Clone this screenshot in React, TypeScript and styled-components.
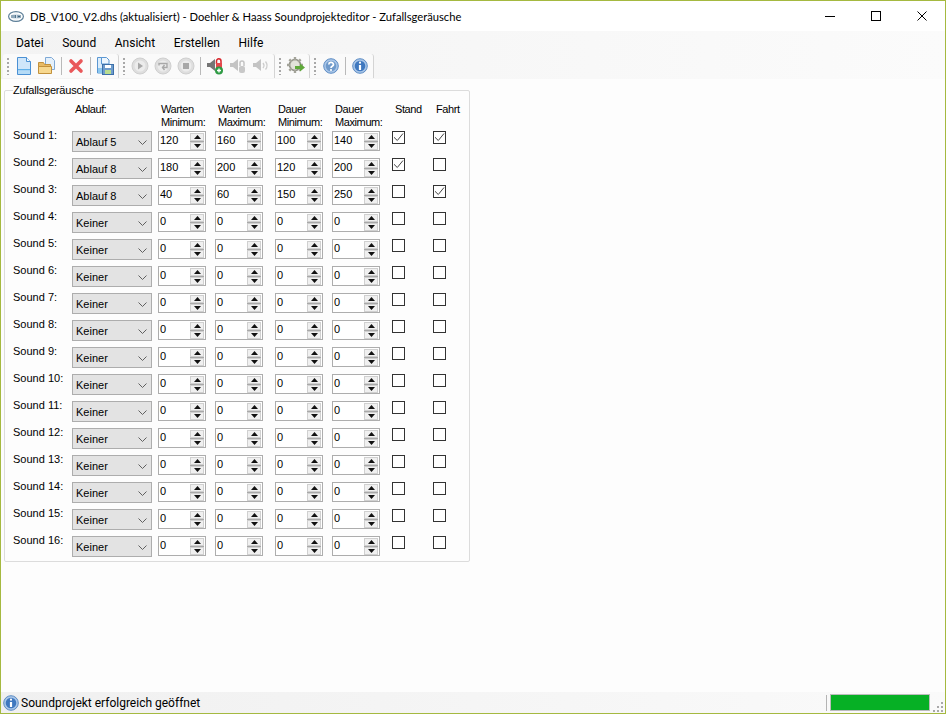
import * as React from "react";
import styled, { createGlobalStyle } from "styled-components";

const GlobalStyle = createGlobalStyle`
  html, body {
    margin: 0;
    padding: 0;
    background: #fff;
  }
`;

const Window = styled.div`
  width: 946px;
  height: 714px;
  box-sizing: border-box;
  border: 1px solid #a5b940;
  display: flex;
  flex-direction: column;
  background: #fdfdfd;
  font-family: "Liberation Sans", Arial, sans-serif;
  font-size: 11px;
  color: #000;
  overflow: hidden;
`;

const TitleBar = styled.div`
  height: 30px;
  flex: none;
  display: flex;
  align-items: center;
  background: #fff;
  padding-left: 7px;
`;

const TitleText = styled.div`
  font-family: Lato, sans-serif;
  font-size: 11.2px;
  margin-left: 6px;
  flex: 1;
  white-space: nowrap;
`;

const WindowButton = styled.div`
  width: 46px;
  height: 30px;
  display: flex;
  align-items: center;
  justify-content: center;
`;

const MenuBar = styled.div`
  height: 23px;
  flex: none;
  display: flex;
  align-items: center;
  padding-left: 5.7px;
  background: linear-gradient(90deg, #f3f3f3, #fbfbfb);
`;

const MenuItem = styled.div`
  font-family: Roboto, sans-serif;
  font-size: 12px;
  padding: 0 9.3px;
`;

const ToolBar = styled.div`
  height: 25px;
  flex: none;
  display: flex;
  padding-left: 2px;
  background: linear-gradient(90deg, #f3f3f3, #fbfbfb);
`;

const ToolStrip = styled.div<{ $width: number }>`
  width: ${(p) => p.$width}px;
  height: 24px;
  box-sizing: border-box;
  display: flex;
  align-items: center;
  background: #fafafa;
  border-radius: 3px 3px 0 0;
  border-right: 1px solid #d4d4d4;
`;

const Grip = styled.div`
  width: 2px;
  height: 17px;
  margin: 0 3.5px 0 4px;
  flex: none;
  background: repeating-linear-gradient(180deg, #a8a8a8 0 2px, transparent 2px 4px);
`;

const ToolButton = styled.div`
  width: 23px;
  height: 22px;
  flex: none;
  display: flex;
  align-items: center;
  justify-content: center;
`;

const ToolSeparator = styled.div`
  width: 1px;
  height: 18px;
  margin: 0 2.5px;
  flex: none;
  background: #b9b9b9;
`;

const Content = styled.div`
  flex: 1;
  min-height: 0;
  padding: 4px 0 0 3px;
`;

const GroupBox = styled.fieldset`
  width: 466px;
  height: 479px;
  box-sizing: border-box;
  margin: 0;
  padding: 0 0 0 8px;
  border: 1px solid #dcdcdc;
  border-radius: 2px;
`;

const Legend = styled.legend`
  padding: 0 2px 0 0;
  margin-left: 0;
  line-height: 14px;
  letter-spacing: -0.2px;
`;

const SoundGrid = styled.div`
  display: grid;
  grid-template-columns: 59px 86px 57px 60px 57px 60px 41px 36px;
  grid-template-rows: 29px repeat(16, 27px);
  margin-top: 5px;
`;

const HeaderCell = styled.div`
  line-height: 13px;
  padding: 1px 0 0 3px;
  white-space: nowrap;
  letter-spacing: -0.4px;
`;

const HeaderSpacer = styled.div``;

const SoundLabel = styled.div`
  line-height: 14px;
  margin-top: -3px;
  white-space: nowrap;
`;

const Combo = styled.div`
  width: 80px;
  height: 21px;
  box-sizing: border-box;
  border: 1px solid #adadad;
  background: #e3e3e3;
  display: flex;
  align-items: center;
  justify-content: space-between;
  padding: 1px 4px 0 3px;
`;

const Spin = styled.div`
  width: 48px;
  height: 20px;
  box-sizing: border-box;
  border: 1px solid #adadad;
  background: #fff;
  display: flex;
  align-items: flex-start;
  justify-content: space-between;
  padding: 1px 1px 0 1px;
  line-height: 14px;
`;

const SpinButtons = styled.div`
  width: 14px;
  height: 17px;
  display: flex;
  flex-direction: column;
  justify-content: space-between;
  background: #a8a8a8;
`;

const SpinButton = styled.div`
  height: 8px;
  box-sizing: border-box;
  background: #f0f0f0;
  border: 1px solid #d0d0d0;
  display: flex;
  align-items: center;
  justify-content: center;
`;

const CheckBox = styled.div`
  width: 13px;
  height: 13px;
  box-sizing: border-box;
  border: 1px solid #333;
  background: #fff;
  display: flex;
  align-items: center;
  justify-content: center;
`;

const StatusBar = styled.div`
  height: 21px;
  flex: none;
  display: flex;
  align-items: center;
  padding-left: 2px;
  background: linear-gradient(90deg, #f0f0f0, #fafafa);
`;

const StatusText = styled.div`
  font-family: Roboto, sans-serif;
  font-size: 12px;
  margin-left: 2px;
  flex: 1;
  white-space: nowrap;
`;

const StatusSeparator = styled.div`
  width: 1px;
  height: 16px;
  background: #b4b4b4;
  margin-right: 3px;
`;

const Progress = styled.div`
  width: 100px;
  height: 17px;
  box-sizing: border-box;
  border: 1px solid #bcbcbc;
  background: #06b025;
`;

const ResizeGrip = styled.div`
  width: 15px;
  height: 21px;
  display: flex;
  align-items: flex-end;
  justify-content: flex-end;
`;

const LogoIcon = () => (
  <svg width="16" height="11" viewBox="0 0 16 11">
    <ellipse cx="8" cy="5.5" rx="7.4" ry="4.8" fill="#fff" stroke="#5d7f98" strokeWidth="1.2" />
    <ellipse cx="8" cy="5.5" rx="5.2" ry="3" fill="#dfe8ef" />
    <path d="M4 4v3M6 4v3M7.6 4v3M10 4v3M12 4v3M10 5.5h2" stroke="#2f5a78" strokeWidth="0.9" fill="none" />
  </svg>
);

const NewIcon = () => (
  <svg width="16" height="18" viewBox="0 0 16 18">
    <path d="M1.500.5h9l4 4v13h-13z" fill="#cfe6fa" stroke="#4a90d4" />
    <path d="M10.500.5v4h4" fill="#f4faff" stroke="#4a90d4" />
    <rect x="2" y="12" width="12" height="1.500" fill="#5fb0ea" />
    <rect x="2" y="13.500" width="12" height="3.500" fill="#b5dbf6" />
  </svg>
);

const OpenIcon = () => (
  <svg width="18" height="18" viewBox="0 0 18 18">
    <path d="M7.500.5h6l3 3v9h-9z" fill="#e4f0fb" stroke="#7fa9d6" />
    <path d="M.5 5.500h5l1 2h6v3h-12z" fill="#e8bb66" stroke="#c2913c" />
    <path d="M.5 16.500v-7h13v7z" fill="#f7d88f" stroke="#c2913c" />
  </svg>
);

const DeleteIcon = () => (
  <svg width="16" height="16" viewBox="0 0 16 16">
    <path d="M3 3l10 10M13 3L3 13" stroke="#e9585a" strokeWidth="3.600" strokeLinecap="round" />
  </svg>
);

const SaveIcon = () => (
  <svg width="18" height="18" viewBox="0 0 18 18">
    <path d="M1.500.5h6l2.500 2.500v13h-8.500z" fill="#dcedfb" stroke="#5b97d2" />
    <path d="M5.500.5h5l2.500 2.500v4h-7.500z" fill="#eef6fd" stroke="#5b97d2" />
    <rect x="2" y="11" width="5" height="5" fill="#8cc8f0" />
    <rect x="6.500" y="7.500" width="11" height="10" fill="#6f9ccc" stroke="#3c6fa8" />
    <rect x="9" y="8" width="6" height="3" fill="#fff" />
    <rect x="9" y="13" width="6" height="4" fill="#b9dc8e" />
  </svg>
);

const MediaIcon = ({ kind }: { kind: "play" | "loop" | "stop" }) => (
  <svg width="18" height="18" viewBox="0 0 18 18">
    <circle cx="9" cy="9" r="8" fill="#dedede" stroke="#cfcfcf" />
    <circle cx="9" cy="9" r="5.500" fill="#ececec" />
    {kind === "play" && <path d="M7 5.500l5 3.500-5 3.500z" fill="#a8a8a8" />}
    {kind === "loop" && <path d="M5 8.500v-2h8v4h-4M10.500 8l-2 2.500 2 2.500" fill="none" stroke="#a8a8a8" strokeWidth="1.400" />}
    {kind === "stop" && <rect x="6" y="6" width="6" height="6" fill="#a8a8a8" />}
  </svg>
);

const SpeakerAddIcon = () => (
  <svg width="18" height="18" viewBox="0 0 18 18">
    <path d="M1 6h3l5-4v12l-5-4H1z" fill="#757575" />
    <path d="M10.500 7V4a2.200 2.200 0 0 1 4.500 0v3" fill="none" stroke="#d8242a" strokeWidth="1.500" />
    <rect x="10" y="6" width="6" height="5" fill="#e5484c" />
    <circle cx="13" cy="13.500" r="4" fill="#2f9b45" />
    <path d="M13 11.500v4M11 13.500h4" stroke="#fff" strokeWidth="1.400" />
  </svg>
);

const SpeakerLockIcon = () => (
  <svg width="18" height="18" viewBox="0 0 18 18">
    <path d="M1 6h3l5-4v12l-5-4H1z" fill="#c4c4c4" />
    <path d="M11 9V6a2 2 0 0 1 4 0v3" fill="none" stroke="#c4c4c4" strokeWidth="1.500" />
    <rect x="10" y="9" width="6" height="7" rx="2" fill="#c8c8c8" />
  </svg>
);

const SpeakerIcon = () => (
  <svg width="18" height="18" viewBox="0 0 18 18">
    <path d="M1 6h3l5-4v12l-5-4H1z" fill="#c4c4c4" />
    <path d="M11 6c1.200 1.500 1.200 3.500 0 5M13.500 4.500c2 2.500 2 5.500 0 8" fill="none" stroke="#cdcdcd" strokeWidth="1.300" />
  </svg>
);

const GearIcon = () => (
  <svg width="18" height="18" viewBox="0 0 18 18">
    <circle cx="8" cy="8" r="5.500" fill="#c2c2b8" stroke="#8e8e84" strokeWidth="1.500" />
    <path d="M8 0v16M0 8h16M2.300 2.300l11.400 11.400M13.700 2.300L2.300 13.700" stroke="#a4a49a" strokeWidth="2.400" />
    <circle cx="8" cy="8" r="4.500" fill="#e2e2da" />
    <path d="M8 9h5V6.500l5 4-5 4V12H8z" fill="#5fa83a" />
  </svg>
);

const RoundIcon = ({ glyph, core }: { glyph: "?" | "i"; core: string }) => (
  <svg width="16" height="16" viewBox="0 0 16 16">
    <circle cx="8" cy="8" r="7.300" fill="#a9c6e8" stroke="#5d8cc4" />
    <circle cx="8" cy="8" r="5.300" fill={core} />
    {glyph === "?" ? (
      <path d="M5.800 6.400a2.300 2 0 1 1 3.400 1.800c-.9.500-1.200.9-1.200 1.800" fill="none" stroke="#fff" strokeWidth="1.700" />
    ) : (
      <path d="M8 7v5" stroke="#fff" strokeWidth="2.200" />
    )}
    <circle cx="8" cy={glyph === "?" ? 12 : 4.700} r="1.100" fill="#fff" />
  </svg>
);

const ChevronDown = () => (
  <svg width="9" height="5" viewBox="0 0 9 5">
    <path d="M.5.500l4 4 4-4" fill="none" stroke="#606060" />
  </svg>
);

const SpinArrow = ({ up }: { up?: boolean }) => (
  <svg width="7" height="4" viewBox="0 0 7 4">
    <path d={up ? "M3.500 0L7 4H0z" : "M0 0h7L3.500 4z"} fill="#111" />
  </svg>
);

const CheckMark = () => (
  <svg width="11" height="11" viewBox="0 0 11 11">
    <path d="M1 5.300l3.300 3.200L10 1.500" fill="none" stroke="#444" />
  </svg>
);

interface SoundRow {
  sequence: string;
  values: number[];
  stand: boolean;
  fahrt: boolean;
}

const configured: SoundRow[] = [
  { sequence: "Ablauf 5", values: [120, 160, 100, 140], stand: true, fahrt: true },
  { sequence: "Ablauf 8", values: [180, 200, 120, 200], stand: true, fahrt: false },
  { sequence: "Ablauf 8", values: [40, 60, 150, 250], stand: false, fahrt: true },
];

const rows: SoundRow[] = Array.from({ length: 16 }, (_, i) =>
  configured[i] || { sequence: "Keiner", values: [0, 0, 0, 0], stand: false, fahrt: false }
);

const App = () => (
  <>
    <GlobalStyle />
    <Window>
      <TitleBar>
        <LogoIcon />
        <TitleText>DB_V100_V2.dhs (aktualisiert) - Doehler &amp; Haass Soundprojekteditor - Zufallsgeräusche</TitleText>
        <WindowButton>
          <svg width="10" height="10" viewBox="0 0 10 10"><path d="M0 5.500h10" stroke="#000" /></svg>
        </WindowButton>
        <WindowButton>
          <svg width="10" height="10" viewBox="0 0 10 10"><rect x=".5" y=".5" width="9" height="9" fill="none" stroke="#000" /></svg>
        </WindowButton>
        <WindowButton>
          <svg width="10" height="10" viewBox="0 0 10 10"><path d="M.5.500l9 9M9.500.500l-9 9" stroke="#000" /></svg>
        </WindowButton>
      </TitleBar>
      <MenuBar>
        {["Datei", "Sound", "Ansicht", "Erstellen", "Hilfe"].map((m) => (
          <MenuItem key={m}>{m}</MenuItem>
        ))}
      </MenuBar>
      <ToolBar>
        <ToolStrip $width={116}>
          <Grip />
          <ToolButton><NewIcon /></ToolButton>
          <ToolButton><OpenIcon /></ToolButton>
          <ToolSeparator />
          <ToolButton><DeleteIcon /></ToolButton>
          <ToolSeparator />
          <ToolButton><SaveIcon /></ToolButton>
        </ToolStrip>
        <ToolStrip $width={156}>
          <Grip />
          <ToolButton><MediaIcon kind="play" /></ToolButton>
          <ToolButton><MediaIcon kind="loop" /></ToolButton>
          <ToolButton><MediaIcon kind="stop" /></ToolButton>
          <ToolSeparator />
          <ToolButton><SpeakerAddIcon /></ToolButton>
          <ToolButton><SpeakerLockIcon /></ToolButton>
          <ToolButton><SpeakerIcon /></ToolButton>
        </ToolStrip>
        <ToolStrip $width={35}>
          <Grip />
          <ToolButton><GearIcon /></ToolButton>
        </ToolStrip>
        <ToolStrip $width={64}>
          <Grip />
          <ToolButton><RoundIcon glyph="?" core="#6f9acb" /></ToolButton>
          <ToolSeparator />
          <ToolButton><RoundIcon glyph="i" core="#3f78bf" /></ToolButton>
        </ToolStrip>
      </ToolBar>
      <Content>
        <GroupBox>
          <Legend>Zufallsgeräusche</Legend>
          <SoundGrid>
            <HeaderSpacer />
            <HeaderCell>Ablauf:</HeaderCell>
            <HeaderCell>Warten<br />Minimum:</HeaderCell>
            <HeaderCell>Warten<br />Maximum:</HeaderCell>
            <HeaderCell>Dauer<br />Minimum:</HeaderCell>
            <HeaderCell>Dauer<br />Maximum:</HeaderCell>
            <HeaderCell>Stand</HeaderCell>
            <HeaderCell>Fahrt</HeaderCell>
            {rows.map((row, i) => (
              <React.Fragment key={i}>
                <SoundLabel>Sound {i + 1}:</SoundLabel>
                <div>
                  <Combo>
                    {row.sequence}
                    <ChevronDown />
                  </Combo>
                </div>
                {row.values.map((v, j) => (
                  <div key={j}>
                    <Spin>
                      {v}
                      <SpinButtons>
                        <SpinButton><SpinArrow up /></SpinButton>
                        <SpinButton><SpinArrow /></SpinButton>
                      </SpinButtons>
                    </Spin>
                  </div>
                ))}
                <div><CheckBox>{row.stand && <CheckMark />}</CheckBox></div>
                <div><CheckBox>{row.fahrt && <CheckMark />}</CheckBox></div>
              </React.Fragment>
            ))}
          </SoundGrid>
        </GroupBox>
      </Content>
      <StatusBar>
        <RoundIcon glyph="i" core="#3f78bf" />
        <StatusText>Soundprojekt erfolgreich geöffnet</StatusText>
        <StatusSeparator />
        <Progress />
        <ResizeGrip>
          <svg width="12" height="12" viewBox="0 0 12 12">
            <path d="M8 1h2v2H8zM4 5h2v2H4zM8 5h2v2H8zM0 9h2v2H0zM4 9h2v2H4zM8 9h2v2H8z" fill="#a9a9a9" />
          </svg>
        </ResizeGrip>
      </StatusBar>
    </Window>
  </>
);

export default App;
